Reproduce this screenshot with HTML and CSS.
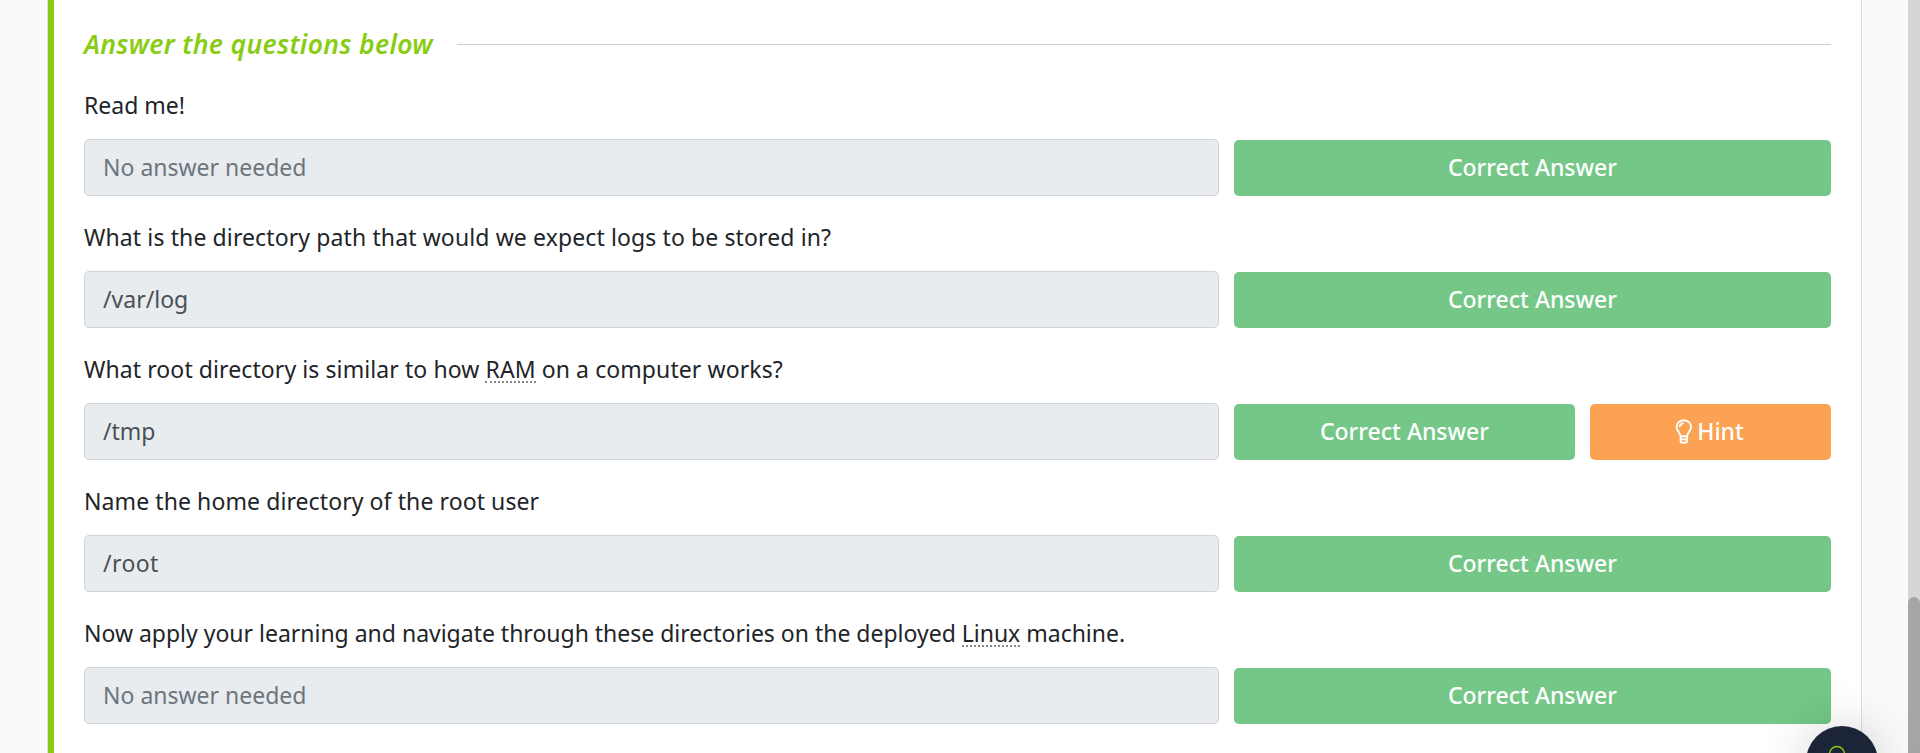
FILE: index.html
```html
<!DOCTYPE html>
<html lang="en"><head><meta charset="utf-8"><title>Tasks</title><link rel="stylesheet" href="styles.css"></head>
<body>
<div class="page">
<main class="card">
  <div class="heading"><h2 class="title">Answer the questions below</h2><span class="rule"></span></div>
  <section class="question">
    <p class="prompt q1">Read me!</p>
    <div class="row"><div class="field muted">No answer needed</div><div class="btn ok">Correct Answer</div></div>
  </section>
  <section class="question">
    <p class="prompt q2">What is the directory path that would we expect logs to be stored in?</p>
    <div class="row"><div class="field">/var/log</div><div class="btn ok">Correct Answer</div></div>
  </section>
  <section class="question">
    <p class="prompt q3">What root directory is similar to how <span class="term">RAM</span> on a computer works?</p>
    <div class="row hinted"><div class="field">/tmp</div><div class="btn ok">Correct Answer</div><div class="btn hint"><svg class="bulb" viewBox="0 0 18 25"><path d="M5.6 17.2C5.2 13.8 1.6 12.2 1.6 7.9a7.2 6.7 0 0 1 14.4 0c0 4.3-3.6 5.9-4 9.3zM4.7 8a4 3.8 0 0 1 4-3.8M5.6 17v4.8q0 2 2 2h2.4q2 0 2-2V17M5.6 20.4H12"/></svg><span>Hint</span></div></div>
  </section>
  <section class="question">
    <p class="prompt q4">Name the home directory of the root user</p>
    <div class="row"><div class="field wide">/root</div><div class="btn ok">Correct Answer</div></div>
  </section>
  <section class="question">
    <p class="prompt q5">Now apply your learning and navigate through these directories on the deployed <span class="term">Linux</span> machine.</p>
    <div class="row"><div class="field muted">No answer needed</div><div class="btn ok">Correct Answer</div></div>
  </section>
</main>
<div class="scrollbar"><div class="thumb"></div></div>
<div class="fab"><svg class="fab-icon" viewBox="0 0 32 32"><circle cx="11" cy="11" r="7.5"/><path d="M17 17l9 9"/></svg></div>
</div>
</body></html>
```
FILE: styles.css
```css
* { box-sizing: border-box; }
body { margin: 0; background: #fafafa; color: #212529; font-family: "Noto Sans", "Open Sans", sans-serif; font-size: 23px; }
.page { position: relative; display: flex; justify-content: space-between; height: 753px; padding-left: 47px; overflow: hidden; }
.card { width: 1815px; height: 753px; background: #fff; border-left: 1px solid #ddd; border-right: 1px solid #ddd; box-shadow: inset 6px 0 #88cc14; padding: 25px 30px 0 36px; }
.heading { display: flex; align-items: center; height: 39px; gap: 24px; }
.title { margin: 0; width: 349px; padding-bottom: 2px; font-size: 26.5px; font-weight: 600; font-style: italic; color: #88cc14; white-space: nowrap; letter-spacing: .31px; }
.rule { flex: 1; height: 1px; background: #ccc; }
.question { height: 132px; padding-top: 21px; }
.question:last-child { height: 131px; }
.prompt { margin: 0; height: 54px; line-height: 40px; white-space: nowrap; }
.q2 { letter-spacing: .115px; }
.q3 { letter-spacing: .09px; }
.q4 { letter-spacing: .09px; }
.q5 { letter-spacing: -.01px; }
.row { display: grid; grid-template-columns: 1135px 597px; column-gap: 15px; align-items: end; }
.hinted { grid-template-columns: 1135px 341px 241px; }
.field { height: 57px; line-height: 55px; padding-left: 18px; border: 1px solid #ced4da; border-radius: 5px; background: #e8ecef; color: #495057; }
.muted { color: #6c757d; }
.wide { letter-spacing: .4px; }
.btn { height: 56px; display: flex; align-items: center; justify-content: center; padding-bottom: 2px; border-radius: 5px; color: #fff; font-weight: 500; }
.ok { background: #74c786; }
.hint { background: #fca253; gap: 4px; padding-right: 2px; }
.bulb { width: 18px; height: 25px; fill: none; stroke: #fff; stroke-width: 1.9; }
.term { display: inline-block; height: 34px; line-height: 40px; vertical-align: top; border-bottom: 2px dotted #888; }
.scrollbar { width: 12px; height: 753px; background: #d6d6d6; padding-top: 597px; }
.thumb { height: 156px; border-radius: 6px 6px 0 0; background: #a6a6a6; }
.fab { position: absolute; left: 1806px; top: 726px; width: 72px; height: 72px; border-radius: 50%; background: #1c2538; box-shadow: 0 0 50px rgba(0,0,0,.18); padding: 17px 0 0 20px; }
.fab-icon { display: block; width: 32px; height: 32px; fill: none; stroke: #88cc14; stroke-width: 1.5; }
```
